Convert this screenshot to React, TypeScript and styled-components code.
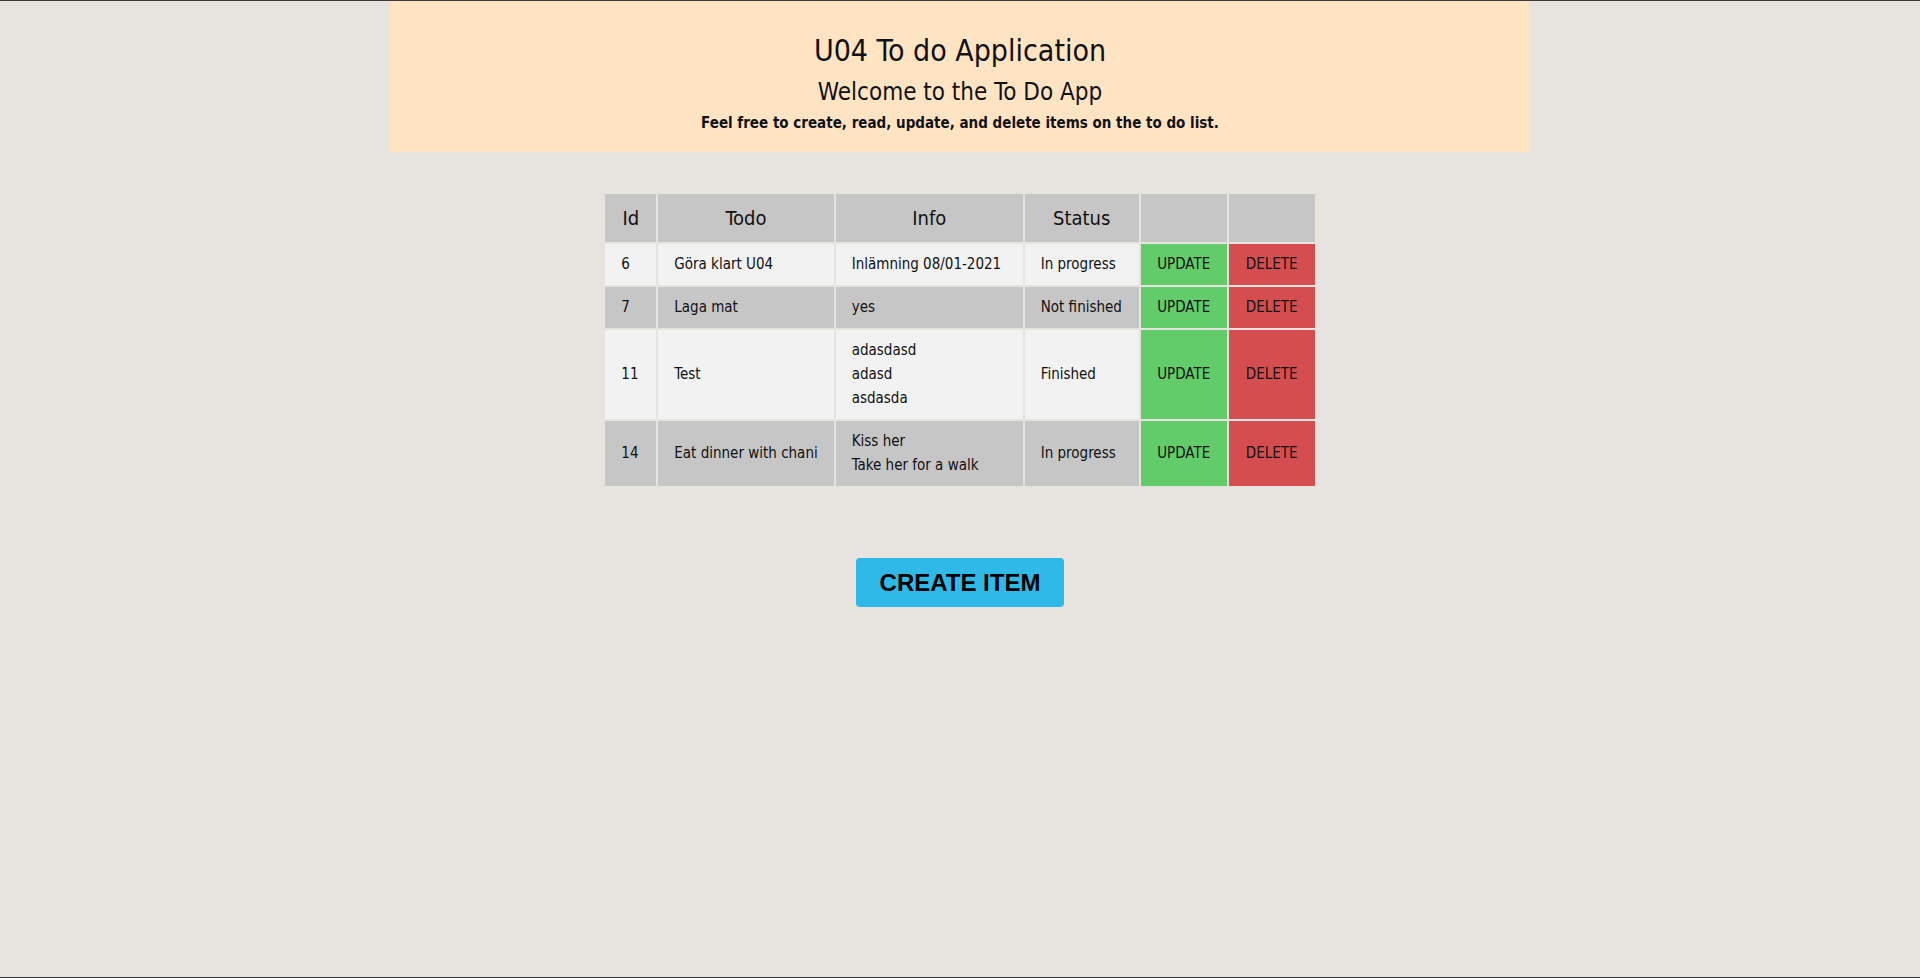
import React from 'react';
import styled, { createGlobalStyle } from 'styled-components';

const GlobalStyle = createGlobalStyle`
  html, body {
    margin: 0;
    padding: 0;
    background: #e7e4df;
  }
  body {
    font-family: "DejaVu Sans Condensed", "Liberation Sans", sans-serif;
    color: #111;
  }
  * {
    box-sizing: border-box;
  }
`;

const Page = styled.div`
  min-height: 978px;
  border-top: 1px solid #3a3a3a;
  border-bottom: 1px solid #3a3a3a;
  display: flex;
  flex-direction: column;
  align-items: center;
`;

const Header = styled.header`
  width: 1140px;
  background: #ffe4c4;
  text-align: center;
  padding: 31px 0 15px;
`;

const Title = styled.h1`
  margin: 0;
  font-size: 30px;
  line-height: 38px;
  font-weight: 400;
`;

const Subtitle = styled.h2`
  margin: 8px 0 0;
  font-size: 24px;
  line-height: 29px;
  font-weight: 400;
`;

const Intro = styled.p`
  margin: 3px 0 0;
  font-size: 15px;
  line-height: 27px;
  font-weight: 600;
`;

const Table = styled.table`
  margin-top: 40px;
  border-collapse: separate;
  border-spacing: 2px;
`;

const Th = styled.th`
  background: #c6c6c6;
  font-size: 20px;
  font-weight: 400;
  line-height: 32px;
  padding: 8px 16px;
  text-align: center;
  white-space: nowrap;
`;

const Row = styled.tr<{ $shade: boolean }>`
  background: ${(p) => (p.$shade ? '#c6c6c6' : '#f2f2f2')};
`;

const Td = styled.td<{ $width: number }>`
  width: ${(p) => p.$width}px;
  font-size: 15px;
  line-height: 24px;
  padding: 8px 16px 9px;
  vertical-align: middle;
  text-align: left;
  white-space: nowrap;
`;

const ActionCell = styled.td<{ $kind: 'update' | 'delete' }>`
  width: 86px;
  background: ${(p) => (p.$kind === 'update' ? '#62cc6a' : '#d44e4f')};
  font-size: 15px;
  padding: 8px 10px 9px;
  text-align: center;
  vertical-align: middle;
  white-space: nowrap;
  cursor: pointer;
`;

const CreateButton = styled.button`
  margin-top: 70px;
  width: 208px;
  height: 49px;
  border: none;
  border-radius: 4px;
  background: #2eb9e6;
  color: #000;
  font-family: "Liberation Sans", Arial, sans-serif;
  font-weight: 700;
  font-size: 24px;
  cursor: pointer;
`;

type Todo = { id: number; todo: string; info: string[]; status: string };

const todos: Todo[] = [
  { id: 6, todo: 'Göra klart U04', info: ['Inlämning 08/01-2021'], status: 'In progress' },
  { id: 7, todo: 'Laga mat', info: ['yes'], status: 'Not finished' },
  { id: 11, todo: 'Test', info: ['adasdasd', 'adasd', 'asdasda'], status: 'Finished' },
  { id: 14, todo: 'Eat dinner with chani', info: ['Kiss her', 'Take her for a walk'], status: 'In progress' },
];

const App: React.FC = () => {
  return (
    <>
      <GlobalStyle />
      <Page>
        <Header>
          <Title>U04 To do Application</Title>
          <Subtitle>Welcome to the To Do App</Subtitle>
          <Intro>Feel free to create, read, update, and delete items on the to do list.</Intro>
        </Header>

        <Table>
          <thead>
            <tr>
              <Th>Id</Th>
              <Th>Todo</Th>
              <Th>Info</Th>
              <Th>Status</Th>
              <Th />
              <Th />
            </tr>
          </thead>
          <tbody>
            {todos.map((t, i) => (
              <Row key={t.id} $shade={i % 2 === 1}>
                <Td $width={51}>{t.id}</Td>
                <Td $width={173}>{t.todo}</Td>
                <Td $width={187}>
                  {t.info.map((line, j) => (
                    <div key={j}>{line}</div>
                  ))}
                </Td>
                <Td $width={114}>{t.status}</Td>
                <ActionCell $kind="update">UPDATE</ActionCell>
                <ActionCell $kind="delete">DELETE</ActionCell>
              </Row>
            ))}
          </tbody>
        </Table>

        <CreateButton>CREATE ITEM</CreateButton>
      </Page>
    </>
  );
};

export default App;
